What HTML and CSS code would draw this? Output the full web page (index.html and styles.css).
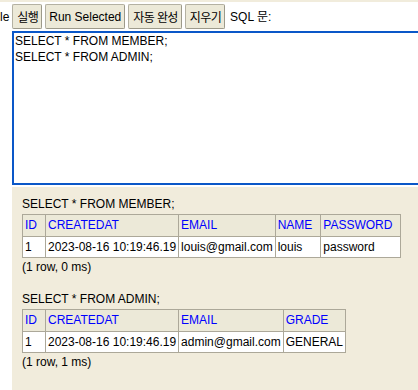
FILE: index.html
```html
<!DOCTYPE html>
<html lang="ko">
<head>
  <meta charset="UTF-8" />
  <meta name="viewport" content="width=device-width, initial-scale=1" />
  <title>H2 Console</title>
  <link rel="stylesheet" href="styles.css">
</head>
<body>
  <div class="page">
    <div class="topline"></div>
    <div class="toolbar">
      <span class="label">le</span>
      <button class="btn ko">실행</button>
      <button class="btn">Run Selected</button>
      <button class="btn ko">자동 완성</button>
      <button class="btn ko">지우기</button>
      <span class="label sql-label">SQL 문:</span>
    </div>
    <textarea class="sql" spellcheck="false">SELECT * FROM MEMBER;
SELECT * FROM ADMIN;</textarea>
    <div class="result">
      <p class="stmt">SELECT * FROM MEMBER;</p>
      <table class="grid">
        <tr>
          <th>ID</th><th>CREATEDAT</th><th>EMAIL</th><th>NAME</th><th>PASSWORD</th>
        </tr>
        <tr>
          <td>1</td><td>2023-08-16 10:19:46.19</td><td>louis@gmail.com</td><td>louis</td><td>password</td>
        </tr>
      </table>
      <p class="info">(1 row, 0 ms)</p>

      <p class="stmt next">SELECT * FROM ADMIN;</p>
      <table class="grid">
        <tr>
          <th>ID</th><th>CREATEDAT</th><th>EMAIL</th><th>GRADE</th>
        </tr>
        <tr>
          <td>1</td><td>2023-08-16 10:19:46.19</td><td>admin@gmail.com</td><td>GENERAL</td>
        </tr>
      </table>
      <p class="info">(1 row, 1 ms)</p>
    </div>
  </div>
</body>
</html>
```

FILE: styles.css
```css
* {
  margin: 0;
  padding: 0;
  box-sizing: border-box;
}
body {
  font-family: "Liberation Sans", Arial, "Noto Sans CJK KR", sans-serif;
  font-size: 12px;
  color: #000;
  background: #fff;
  overflow: hidden;
}
.page {
  display: flex;
  flex-direction: column;
  height: 100vh;
}
.topline {
  height: 2px;
  background: #f1ecdc;
}
.toolbar {
  display: flex;
  align-items: center;
  gap: 3px;
  height: 29px;
  white-space: nowrap;
}
.label {
  line-height: 16px;
}
.sql-label {
  margin-left: 2px;
}
.btn {
  font-family: inherit;
  font-size: 12px;
  height: 25px;
  padding: 0 3px;
  background: #ece9d8;
  border: 1px solid #b4b1a2;
  border-right-color: #9d9a8b;
  border-bottom-color: #9d9a8b;
  border-radius: 2px;
  color: #000;
}
.btn.ko {
  letter-spacing: -0.6px;
  padding: 0 3px 0 4px;
}
.sql {
  display: block;
  margin-left: 12px;
  width: calc(100% - 12px);
  height: 154px;
  border: 2px solid #0a57c8;
  border-right: 0;
  padding: 0 1px;
  font-family: inherit;
  font-size: 12px;
  line-height: 16px;
  resize: none;
  outline: none;
}
.result {
  flex: 1;
  margin: 2px 0 0 12px;
  padding: 10px 10px;
  background: #f1ecdc;
}
.stmt,
.info {
  line-height: 15px;
}
.stmt {
  margin-bottom: 2px;
}
.stmt.next {
  margin-top: 17px;
}
.info {
  margin-top: 2px;
}
.grid {
  border-collapse: collapse;
  border: 1px solid #aca899;
}
.grid th,
.grid td {
  border: 1px solid #aca899;
  padding: 3px 2px;
  line-height: 14px;
  text-align: left;
  white-space: nowrap;
}
.grid th {
  padding: 3px 8px 4px 2px;
  background: #ece9d8;
  color: #0000ff;
  font-weight: normal;
}
.grid td {
  background: #fff;
}
```
